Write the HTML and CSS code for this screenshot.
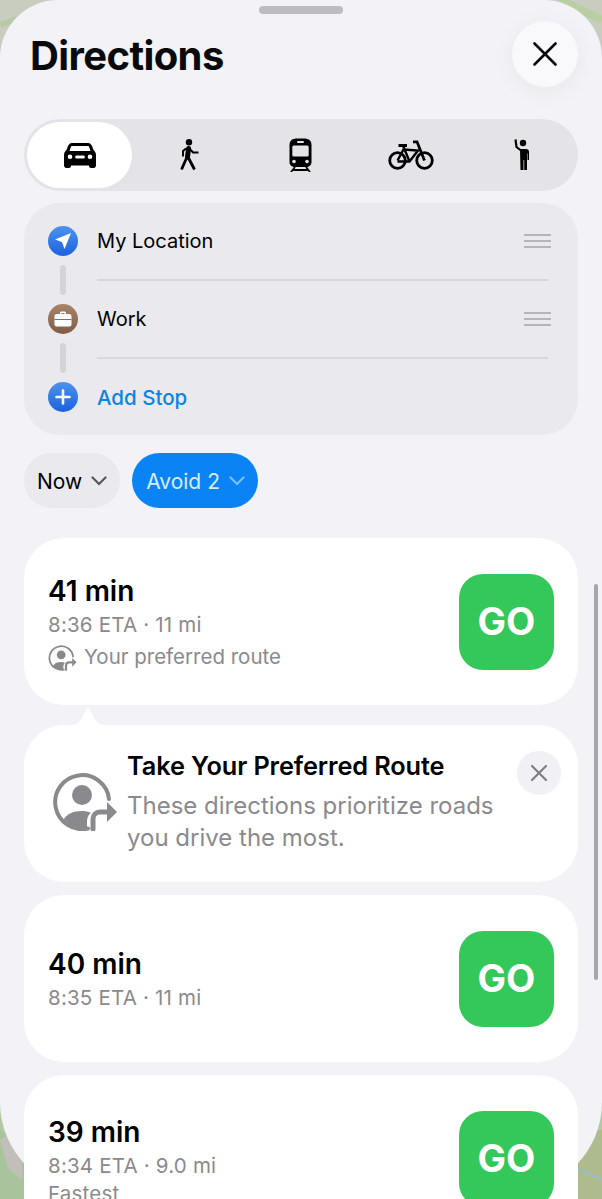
FILE: index.html
```html
<!DOCTYPE html>
<html lang="en">
<head>
    <meta charset="UTF-8">
    <meta name="viewport" content="width=device-width, initial-scale=1.0">
    <title>Directions</title>
    <link rel="stylesheet" href="styles.css">
</head>
<body>

    <!-- map peeking out behind the sheet -->
    <svg class="map" viewBox="0 0 602 1199" preserveAspectRatio="none" aria-hidden="true">
        <rect width="602" height="1199" fill="#b4c8a4"/>
        <rect width="602" height="60" fill="#c9cdbf"/>
        <path d="M0 1130 L24 1150 V1199 H0Z" fill="#a9c49c"/>
        <path d="M0 1140 L22 1125 V1180 L8 1168Z" fill="#c2bfbb"/>
        <path d="M578 1130 H602 V1199 H578Z" fill="#aebb8f"/>
        <path d="M578 1169 L602 1179" stroke="#9dbcc4" stroke-width="2"/>
        <path d="M0 25 L50 8" stroke="#b9c9a6" stroke-width="6"/>
        <path d="M560 0 L602 20" stroke="#b9cfa2" stroke-width="8"/>
    </svg>

    <svg width="0" height="0" class="defs" aria-hidden="true">
        <symbol id="preferred" viewBox="0 0 66 60">
            <path d="M57 28A27 27 0 1 0 36 57.5" fill="none" stroke="currentColor" stroke-width="4" stroke-linecap="round"/>
            <circle cx="30" cy="24" r="10" fill="currentColor"/>
            <path d="M11 50C14 43 21 40 30 40C33 40 36 40.5 39 42C36 44 35 47 35 52V57.5C26 59 17 57 11 50Z" fill="currentColor"/>
            <path d="M41 58V48C41 44 44 41 48 41H56" fill="none" stroke="currentColor" stroke-width="5" stroke-linecap="round"/>
            <path d="M55 31L65 41L55 51Z" fill="currentColor"/>
        </symbol>
    </svg>

    <div class="sheet">
        <div class="handle"></div>

        <header class="sheet-header">
            <h1>Directions</h1>
            <button class="close-button" aria-label="Close">
                <svg width="24" height="24" viewBox="0 0 24 24"><path d="M1.500 1.500L22.500 22.500M22.500 1.500L1.500 22.500" stroke="#0a0a0c" stroke-width="2.600" stroke-linecap="round"/></svg>
            </button>
        </header>

        <div class="modes">
            <div class="mode selected">
                <svg width="32" height="25" viewBox="0 0 32 25"><path fill-rule="evenodd" d="M8 0H24C26 0 27 1 28 3L29.500 7C31 8 32 10 32 12V22C32 24 31 25 29.500 25H27C25.500 25 25 24 25 22.500H7C7 24 6.500 25 5 25H2.500C1 25 0 24 0 22V12C0 10 1 8 2.500 7L4 3C5 1 6 0 8 0ZM8.500 3C7.500 3 7 3.500 6.700 4.200L5.500 8H26.500L25.300 4.200C25 3.500 24.500 3 23.500 3ZM6 11.500A2.300 2.300 0 1 0 6 16.100A2.300 2.300 0 1 0 6 11.500ZM26 11.500A2.300 2.300 0 1 0 26 16.100A2.300 2.300 0 1 0 26 11.500ZM12 12.500C11 12.500 11 15.500 12 15.500H20C21 15.500 21 12.500 20 12.500Z"/></svg>
            </div>
            <div class="mode">
                <svg width="19" height="32" viewBox="0 0 19 32">
                    <circle cx="9" cy="3.200" r="3.200"/>
                    <path d="M8.500 9.500L7.500 18" fill="none" stroke="#000" stroke-width="5" stroke-linecap="round"/>
                    <path d="M7 18L1.500 30.500M8 18L14.500 30.500" fill="none" stroke="#000" stroke-width="2.800"/>
                    <path d="M9 9L13 13.500H18.500M6 9.500L3 12V17.500" fill="none" stroke="#000" stroke-width="2"/>
                </svg>
            </div>
            <div class="mode">
                <svg width="23" height="34" viewBox="0 0 23 34">
                    <path d="M8 0.500H15C19.500 0.500 22.500 2.500 22.500 7V24C22.500 27.500 20 29 17 29H6C3 29 0.500 27.500 0.500 24V7C0.500 2.500 3.500 0.500 8 0.500Z"/>
                    <rect x="3.300" y="7.500" width="16.400" height="11" rx="1.500" fill="#e3e3e8"/>
                    <rect x="8" y="3" width="7" height="2" rx="1" fill="#e3e3e8"/>
                    <circle cx="5" cy="23.500" r="1.800" fill="#e3e3e8"/>
                    <circle cx="18" cy="23.500" r="1.800" fill="#e3e3e8"/>
                    <path d="M6 29L2 34M17 29L21 34M4 32H19" fill="none" stroke="#000" stroke-width="1.800"/>
                </svg>
            </div>
            <div class="mode">
                <svg width="46" height="30" viewBox="0 0 46 30" fill="none" stroke="#000">
                    <circle cx="9.500" cy="20.500" r="7.800" stroke-width="2.800"/>
                    <circle cx="36.500" cy="20.500" r="7.800" stroke-width="2.800"/>
                    <path d="M9.500 20.500L15.500 9.500L30 10.500L21.500 21.500H9.500M15 5.500L21.500 21.500" stroke-width="2.400"/>
                    <path d="M10.500 5.500H19M25 1.800H29L36.500 20.500" stroke-width="2.800"/>
                </svg>
            </div>
            <div class="mode">
                <svg width="16" height="32" viewBox="0 0 16 32">
                    <circle cx="9" cy="4" r="3.200"/>
                    <path d="M1.500 0.500L2.500 8L7 11.500" fill="none" stroke="#000" stroke-width="2.200"/>
                    <path d="M6 10H12C14 10 15 11 15 13V21H13.500V14.500H13V31H10.200V21H9.500V31H6.500Z"/>
                </svg>
            </div>
        </div>

        <div class="stops">
            <div class="stop">
                <span class="stop-icon blue">
                    <svg width="18" height="18" viewBox="0 0 18 18"><path d="M17 1L10.500 17L8 10L1 7.500Z" fill="#fff"/></svg>
                </span>
                <span class="stop-name">My Location</span>
                <span class="grip"><i></i><i></i><i></i></span>
            </div>
            <div class="stop-divider"><span class="connector"></span><span class="rule"></span></div>
            <div class="stop">
                <span class="stop-icon brown">
                    <svg width="18" height="16" viewBox="0 0 18 16"><path fill-rule="evenodd" d="M6 3V2C6 1 6.800 0.500 7.500 0.500H10.500C11.200 0.500 12 1 12 2V3H15.500C16.500 3 17.500 4 17.500 5V13.500C17.500 14.500 16.500 15.500 15.500 15.500H2.500C1.500 15.500 0.500 14.500 0.500 13.500V5C0.500 4 1.500 3 2.500 3ZM7.500 3H10.500V2H7.500Z" fill="#fff"/><path d="M0.500 8.500H17.500" stroke="#8f6a4f" stroke-width="1"/></svg>
                </span>
                <span class="stop-name">Work</span>
                <span class="grip"><i></i><i></i><i></i></span>
            </div>
            <div class="stop-divider"><span class="connector"></span><span class="rule"></span></div>
            <div class="stop">
                <span class="stop-icon blue">
                    <svg width="16" height="16" viewBox="0 0 16 16"><path d="M8 1.500V14.500M1.500 8H14.500" stroke="#fff" stroke-width="2.600" stroke-linecap="round"/></svg>
                </span>
                <span class="stop-name add">Add Stop</span>
            </div>
        </div>

        <div class="chips">
            <button class="chip">Now
                <svg width="16" height="10" viewBox="0 0 16 10"><path d="M1.500 1.500L8 8L14.500 1.500" fill="none" stroke="#58585c" stroke-width="2.200" stroke-linecap="round"/></svg>
            </button>
            <button class="chip active">Avoid 2
                <svg width="16" height="10" viewBox="0 0 16 10"><path d="M1.500 1.500L8 8L14.500 1.500" fill="none" stroke="#7cc0fb" stroke-width="2.200" stroke-linecap="round"/></svg>
            </button>
        </div>

        <div class="route first">
            <div class="route-info">
                <div class="route-time">41 min</div>
                <div class="route-meta">8:36 ETA · 11 mi</div>
                <div class="route-meta note">
                    <svg class="note-icon"><use href="#preferred"/></svg>
                    Your preferred route
                </div>
            </div>
            <button class="go">GO</button>
        </div>

        <div class="tip">
            <svg class="tip-pointer" width="56" height="20" viewBox="0 0 56 20"><path d="M0 20C14 20 18 18 22 12L28 1L34 12C38 18 42 20 56 20Z" fill="#fff"/></svg>
            <svg class="tip-icon"><use href="#preferred"/></svg>
            <div class="tip-text">
                <div class="tip-title">Take Your Preferred Route</div>
                <div class="tip-body">These directions prioritize roads you drive the most.</div>
            </div>
            <button class="tip-close" aria-label="Dismiss">
                <svg width="16" height="16" viewBox="0 0 16 16"><path d="M1 1L15 15M15 1L1 15" stroke="#7e7e84" stroke-width="2.200" stroke-linecap="round"/></svg>
            </button>
        </div>

        <div class="route">
            <div class="route-info">
                <div class="route-time">40 min</div>
                <div class="route-meta">8:35 ETA · 11 mi</div>
            </div>
            <button class="go">GO</button>
        </div>

        <div class="route">
            <div class="route-info">
                <div class="route-time">39 min</div>
                <div class="route-meta">8:34 ETA · 9.0 mi</div>
                <div class="route-meta tag">Fastest</div>
            </div>
            <button class="go">GO</button>
        </div>
    </div>

    <div class="scrollbar"></div>

</body>
</html>
```

FILE: styles.css
```css
body {
    margin: 0;
    height: 1199px;
    overflow: hidden;
    position: relative;
    font-family: Inter, "Noto Sans", sans-serif;
    color: #000;
}
button {
    font-family: inherit;
    border: none;
    padding: 0;
    cursor: pointer;
}
.map {
    position: absolute;
    top: 0;
    left: 0;
    width: 602px;
    height: 1199px;
}
.defs {
    position: absolute;
}
.sheet {
    position: relative;
    box-sizing: border-box;
    height: 1192px;
    padding: 6px 24px 0;
    background-color: #f2f2f7;
    border-radius: 58px 58px 90px 90px;
}
.handle {
    width: 84px;
    height: 8px;
    margin: 0 auto;
    background-color: #bcbcc2;
    border-radius: 4px;
}
.sheet-header {
    display: flex;
    justify-content: space-between;
    align-items: flex-start;
    box-sizing: border-box;
    height: 105px;
    padding-top: 7px;
}
.sheet-header h1 {
    margin: 12px 0 0 6px;
    font-size: 40px;
    line-height: 46px;
    font-weight: 700;
    letter-spacing: -0.6px;
    color: #0a0a0c;
}
.close-button {
    display: flex;
    align-items: center;
    justify-content: center;
    width: 66px;
    height: 66px;
    border-radius: 50%;
    background-color: #f9f9fb;
    box-shadow: 0 4px 24px rgba(0, 0, 0, 0.05);
}

/* transport modes */
.modes {
    display: flex;
    height: 72px;
    box-sizing: border-box;
    padding: 3px;
    background-color: #e3e3e8;
    border-radius: 36px;
}
.mode {
    flex: 1;
    display: flex;
    align-items: center;
    justify-content: center;
    padding-left: 5px;
}
.mode.selected {
    flex: none;
    width: 105px;
    padding: 0;
    background-color: #fff;
    border-radius: 33px;
}
.stops {
    margin-top: 12px;
    height: 232px;
    box-sizing: border-box;
    padding: 19px 30px 0 24px;
    background-color: #e9e9ee;
    border-radius: 36px;
}
.stop {
    display: flex;
    align-items: center;
    height: 38px;
}
.stop-icon {
    flex: none;
    display: flex;
    align-items: center;
    justify-content: center;
    width: 30px;
    height: 30px;
    margin-right: 19px;
    border-radius: 50%;
}
.stop-icon.blue {
    background: linear-gradient(#4c93ee, #1c62de);
}
.stop-icon.brown {
    background: linear-gradient(#a98468, #7f5c44);
}
.stop-name {
    flex: 1;
    font-size: 20px;
}
.stop-name.add {
    font-size: 20.500px;
    font-weight: 500;
    color: #0a84e6;
}
.grip {
    flex: none;
    display: flex;
    flex-direction: column;
    gap: 4px;
    width: 27px;
    margin-right: -3px;
}
.grip i {
    height: 2px;
    background-color: #b4b4b9;
}
.stop-divider {
    display: flex;
    height: 40px;
}
.connector {
    width: 6px;
    height: 30px;
    margin: 5px 31px 0 12px;
    background-color: #d3d3d8;
    border-radius: 3px;
}
.rule {
    flex: 1;
    height: 2px;
    margin-top: 19px;
    background-color: #d6d6db;
}
.chips {
    display: flex;
    gap: 12px;
    margin-top: 18px;
}
.chip {
    display: flex;
    align-items: center;
    gap: 9px;
    height: 55px;
    padding: 1px 13px 0;
    font-size: 21px;
    color: #000;
    background-color: #e9e9ee;
    border-radius: 28px;
}
.chip.active {
    padding: 1px 13px 0 14px;
    color: #d8ecff;
    background-color: #0a84f5;
}

/* route cards */
.route {
    display: flex;
    justify-content: space-between;
    align-items: center;
    box-sizing: border-box;
    height: 167px;
    padding: 0 24px;
    margin-top: 13px;
    background-color: #fff;
    border-radius: 40px;
}
.route.first {
    margin-top: 30px;
}
.route-info {
    padding-top: 3px;
}
.route-time {
    font-size: 28px;
    line-height: 36px;
    font-weight: 600;
}
.route-meta {
    font-size: 20.500px;
    line-height: 32px;
    letter-spacing: 0.2px;
    color: #8a8a8e;
}
.route-meta.tag {
    line-height: 24px;
}
.note {
    display: flex;
    align-items: center;
    gap: 7px;
    letter-spacing: 0;
}
.note-icon {
    width: 29px;
    height: 27px;
    color: #8a8a8e;
}
.go {
    flex: none;
    width: 95px;
    height: 96px;
    padding-bottom: 2px;
    font-size: 38px;
    font-weight: 700;
    color: #fff;
    background-color: #34c759;
    border-radius: 24px;
}
.tip {
    position: relative;
    display: flex;
    box-sizing: border-box;
    height: 157px;
    margin-top: 20px;
    padding: 25px 17px 0 27px;
    background-color: #fff;
    border-radius: 40px;
}
.tip-pointer {
    position: absolute;
    top: -19px;
    left: 36px;
}
.tip-icon {
    flex: none;
    width: 66px;
    height: 60px;
    margin: 21px 9px 0 1px;
    color: #8a8a8e;
}
.tip-text {
    flex: 1;
}
.tip-title {
    font-size: 25.300px;
    line-height: 32px;
    font-weight: 600;
    letter-spacing: -0.1px;
    white-space: nowrap;
}
.tip-body {
    margin-top: 8px;
    font-size: 24px;
    line-height: 32px;
    color: #8a8a8e;
}
.tip-close {
    flex: none;
    display: flex;
    align-items: center;
    justify-content: center;
    width: 44px;
    height: 44px;
    margin-top: 1px;
    border-radius: 50%;
    background-color: #f0f0f5;
}
.scrollbar {
    position: absolute;
    top: 584px;
    left: 594px;
    width: 4px;
    height: 396px;
    background-color: #a5a5aa;
    border-radius: 2px;
}
```
